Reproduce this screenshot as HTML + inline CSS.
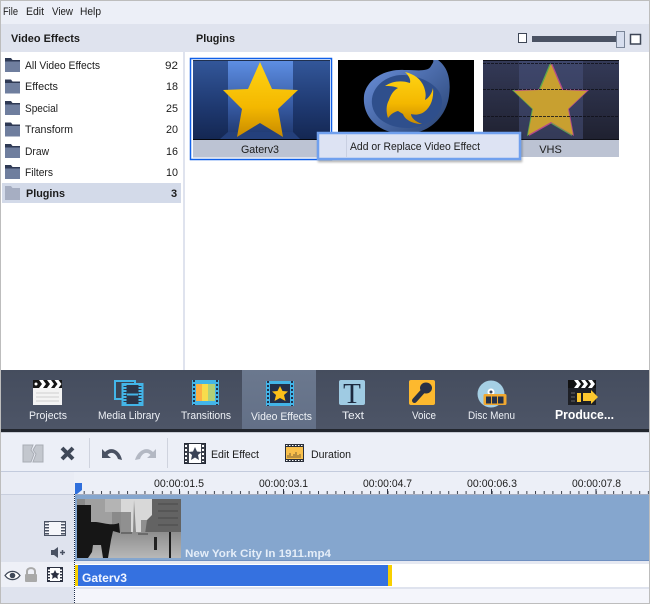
<!DOCTYPE html>
<html><head><meta charset="utf-8"><style>
html,body{margin:0;padding:0;width:650px;height:604px;overflow:hidden;background:#fff}
svg{display:block}
text{font-family:"Liberation Sans",sans-serif;font-size:11px;fill:#1c1c1c}
.b{font-weight:bold}
.w{fill:#eef1f6}
.c{text-anchor:middle}
</style></head><body>
<svg width="650" height="604" viewBox="0 0 650 604" xmlns="http://www.w3.org/2000/svg">
<defs>
<linearGradient id="side" x1="0" y1="0" x2="0" y2="1"><stop offset="0" stop-color="#33579a"/><stop offset=".6" stop-color="#1e386f"/><stop offset="1" stop-color="#142752"/></linearGradient>
<linearGradient id="mid" x1="0" y1="0" x2="0" y2="1"><stop offset="0" stop-color="#5e8fe4"/><stop offset=".6" stop-color="#35589f"/><stop offset="1" stop-color="#1d3468"/></linearGradient>
<linearGradient id="gold" x1="0" y1="0" x2="0" y2="1"><stop offset="0" stop-color="#ffd414"/><stop offset=".6" stop-color="#f4b800"/><stop offset="1" stop-color="#c88a00"/></linearGradient>
<linearGradient id="vhs" x1="0" y1="0" x2="0" y2="1"><stop offset="0" stop-color="#343a58"/><stop offset="1" stop-color="#1f2130"/></linearGradient>
<linearGradient id="blue" x1="0" y1="0" x2="1" y2="1"><stop offset="0" stop-color="#6d93e0"/><stop offset="1" stop-color="#26406f"/></linearGradient>
<linearGradient id="bar" x1="0" y1="0" x2="0" y2="1"><stop offset="0" stop-color="#454d5e"/><stop offset="1" stop-color="#4d5567"/></linearGradient>
<linearGradient id="act" x1="0" y1="0" x2="0" y2="1"><stop offset="0" stop-color="#6b788e"/><stop offset="1" stop-color="#637087"/></linearGradient>
<linearGradient id="ground" x1="0" y1="0" x2="0" y2="1"><stop offset="0" stop-color="#8e8e8e"/><stop offset="1" stop-color="#b8b8b8"/></linearGradient>
<pattern id="ticks" x="75" y="488" width="8.68" height="7" patternUnits="userSpaceOnUse"><rect x="0" y="3" width="1" height="3" fill="#3a3f4a"/></pattern>
<filter id="sh" x="-5%" y="-20%" width="110%" height="140%"><feDropShadow dx="1" dy="2" stdDeviation="1" flood-color="#000" flood-opacity=".3"/></filter>
<g id="fold"><path d="M0 0H6L7.5 2H15V14H0Z" fill="#2f3a55"/><rect x="0" y="3.500" width="15" height="10.500" fill="#6f7e9e"/></g>
</defs>

<!-- frame + menu -->
<rect width="650" height="604" fill="#fff"/>
<rect x="0" y="0" width="650" height="24" fill="#eceff7"/>
<text x="3" y="15" textLength="15" lengthAdjust="spacingAndGlyphs">File</text>
<text x="26" y="15" textLength="18" lengthAdjust="spacingAndGlyphs">Edit</text>
<text x="52" y="15" textLength="21" lengthAdjust="spacingAndGlyphs">View</text>
<text x="80" y="15" textLength="21" lengthAdjust="spacingAndGlyphs">Help</text>

<!-- panel headers -->
<rect x="0" y="24" width="650" height="28" fill="#dfe3ee"/>
<rect x="183" y="24" width="2" height="346" fill="#dfe3ee"/>
<text class="b" x="11" y="42" textLength="69" lengthAdjust="spacingAndGlyphs">Video Effects</text>
<text class="b" x="196" y="42" textLength="39" lengthAdjust="spacingAndGlyphs">Plugins</text>

<!-- slider -->
<rect x="518.500" y="33.500" width="8" height="9" fill="#fff" stroke="#3e4656"/>
<rect x="532" y="36" width="86" height="6" fill="#4a5263"/>
<rect x="616.500" y="31.500" width="8" height="16" fill="#d7deee" stroke="#7a8598"/>
<rect x="630.500" y="34.500" width="10" height="9.500" fill="#fff" stroke="#3e4656" stroke-width="1.500"/>

<!-- list -->
<rect x="2" y="183" width="179" height="20" fill="#d3dae9"/>
<use href="#fold" x="5" y="58"/><use href="#fold" x="5" y="79.500"/><use href="#fold" x="5" y="101"/><use href="#fold" x="5" y="122.500"/><use href="#fold" x="5" y="144"/><use href="#fold" x="5" y="165"/>
<path d="M5 186H11L12.500 188H20V200H5Z" fill="#a6aec2"/>
<text x="25" y="69" textLength="75" lengthAdjust="spacingAndGlyphs">All Video Effects</text>
<text x="25" y="90" textLength="33" lengthAdjust="spacingAndGlyphs">Effects</text>
<text x="25" y="112" textLength="33" lengthAdjust="spacingAndGlyphs">Special</text>
<text x="25" y="133" textLength="48" lengthAdjust="spacingAndGlyphs">Transform</text>
<text x="25" y="155" textLength="24" lengthAdjust="spacingAndGlyphs">Draw</text>
<text x="25" y="176" textLength="28" lengthAdjust="spacingAndGlyphs">Filters</text>
<text class="b" x="26" y="197" textLength="39" lengthAdjust="spacingAndGlyphs">Plugins</text>
<text x="165" y="69" textLength="13" lengthAdjust="spacingAndGlyphs">92</text>
<text x="166" y="90" textLength="12" lengthAdjust="spacingAndGlyphs">18</text>
<text x="166" y="112" textLength="12" lengthAdjust="spacingAndGlyphs">25</text>
<text x="166" y="133" textLength="12" lengthAdjust="spacingAndGlyphs">20</text>
<text x="166" y="155" textLength="12" lengthAdjust="spacingAndGlyphs">16</text>
<text x="166" y="176" textLength="12" lengthAdjust="spacingAndGlyphs">10</text>
<text class="b" x="171" y="197">3</text>

<!-- thumb 1 -->
<rect x="190.500" y="58.500" width="141" height="101" fill="#fff" stroke="#0f5fe8" stroke-width="1.500"/>
<rect x="193" y="60" width="137" height="80" fill="url(#side)"/>
<rect x="228" y="60" width="65" height="80" fill="url(#mid)"/>
<path d="M220 139 L228 132 H293 L300 139Z" fill="#24407c"/>
<rect x="193" y="60" width="137" height="1" fill="#20304e"/>
<rect x="193" y="139" width="137" height="1" fill="#05070e"/>
<polygon points="260,62 272,89 298,90 278,109 283,137 260,123 237,137 242,109 223,90 248,89" fill="url(#gold)"/>
<rect x="193" y="140" width="137" height="17.500" fill="#bcc3d3"/>
<text class="c" x="260" y="153" textLength="38" lengthAdjust="spacingAndGlyphs">Gaterv3</text>

<!-- thumb 2 -->
<rect x="338" y="60" width="136" height="80" fill="#000"/>
<path d="M438 60 C449 68 451 82 449 96 C446 118 428 133 408 134 C380 135 362 118 364 96 C366 80 384 69 404 70 C418 70 428 72 431 66 C433 63 434 61 433 60Z" fill="url(#blue)"/>
<path d="M372 104 C370 88 386 74 404 75 C420 76 440 84 442 100 C443 116 426 128 408 128 C390 128 374 120 372 104Z" fill="#2f4f8c"/>
<path d="M405 72 C414 74 421 79 424 87 C426 93 426 96 425 100 C429 98 432 93 433 88 C434 98 431 107 424 112 C420 115 414 115 411 114 C411 118 416 122 422 124 C413 124 405 120 403 114 L398 111 C394 112 391 114 388 118 C386 112 386 105 389 100 C391 94 394 90 398 88 C394 86 389 86 385 86 C392 81 402 80 410 83 C411 79 408 75 405 72Z" fill="url(#gold)"/>

<!-- thumb 3 -->
<rect x="483" y="60" width="136" height="80" fill="url(#vhs)"/>
<rect x="519" y="61" width="64" height="78" fill="#4a5480" opacity=".5"/>
<polygon points="550,63 561,89 587,90 567,109 572,136 550,123 527,136 532,109 512,90 539,89" fill="#5fa84c"/>
<polygon points="552,63 563,89 589,90 569,109 574,136 552,123 529,136 534,109 514,90 541,89" fill="#b24a8c"/>
<polygon points="551,64 562,90 587,91 568,109 573,135 551,122 528,135 533,109 514,91 540,90" fill="#c8a030"/>
<g fill="#0f1018"><rect x="483" y="139" width="136" height="1"/><rect x="483" y="60" width="136" height="1"/></g>
<path d="M483 63.500H619M483 89.500H619M483 116.500H619" stroke="#0f1018" stroke-dasharray="3 1" opacity=".8"/>
<rect x="483" y="140" width="136" height="17" fill="#bcc3d3"/>
<text class="c" x="550.500" y="153">VHS</text>

<!-- context menu -->
<g filter="url(#sh)"><rect x="318" y="133" width="202" height="26" fill="#dde3f3" stroke="#6fa0ee" stroke-width="2.500"/></g>
<rect x="346" y="135" width="1" height="22" fill="#c9d0e2"/>
<text x="350" y="150" textLength="130" lengthAdjust="spacingAndGlyphs">Add or Replace Video Effect</text>

<!-- nav bar -->
<rect x="0" y="370" width="650" height="59" fill="url(#bar)"/>
<rect x="242" y="370" width="74" height="59" fill="url(#act)"/>
<rect x="0" y="429" width="650" height="3" fill="#22262e"/>
<rect x="0" y="432" width="650" height="1" fill="#c6cad3"/>
<!-- Projects -->
<rect x="33" y="388" width="29" height="17" fill="#f3f3f3"/>
<rect x="33" y="380" width="29" height="8" fill="#151515"/>
<path d="M39 380h4l3 4-3 4h-4l3-4zM47 380h4l3 4-3 4h-4l3-4zM54.500 380h4l3 4-3 4h-4l3-4z" fill="#fff"/>
<circle cx="36" cy="384" r="1.500" fill="#fff"/>
<path d="M36 393h23M36 397h23M36 401h23" stroke="#cfcfcf"/>
<!-- Media library -->
<rect x="115" y="381" width="20" height="18" fill="#3a4354" stroke="#43b5e8" stroke-width="2"/>
<rect x="122.500" y="384" width="20" height="21" fill="#2c3548" stroke="#43b5e8" stroke-width="2"/>
<path d="M127 394.500h11" stroke="#43b5e8" stroke-width="2"/>
<path d="M125 384v21M140 384v21" stroke="#43b5e8" stroke-width="3" stroke-dasharray="2 1"/>
<!-- Transitions -->
<rect x="192" y="380" width="27" height="25" fill="#43b5e8"/>
<rect x="196" y="384" width="6" height="17" fill="#fdb144"/>
<rect x="202" y="384" width="6" height="17" fill="#f8dc4c"/>
<rect x="208" y="384" width="7" height="17" fill="#b0d078"/>
<path d="M194 380v25M217 380v25" stroke="#21324a" stroke-width="2" stroke-dasharray="2 2"/>
<!-- Video effects -->
<rect x="266" y="381" width="28" height="25" fill="#43b5e8"/>
<rect x="270" y="384" width="20" height="19" fill="#23304a"/>
<path d="M268 381v25M292 381v25" stroke="#23304a" stroke-width="2" stroke-dasharray="2 2"/>
<polygon points="280,386 282.500,391 288,391.500 284,395 285.500,401 280,398 274.500,401 276,395 272,391.500 277.500,391" fill="#fdc119"/>
<!-- Text -->
<rect x="339" y="380" width="26" height="25" rx="2" fill="#9fcbe3"/>
<text x="352" y="403" text-anchor="middle" style="font-family:'Liberation Serif',serif;font-size:29px;fill:#1d2a40">T</text>
<!-- Voice -->
<rect x="409" y="380" width="26" height="25" rx="2" fill="#fdb92e"/>
<path d="M414.500 400.500 L423 391" stroke="#2a3145" stroke-width="5" stroke-linecap="round"/>
<ellipse cx="426" cy="388" rx="6" ry="5.500" fill="#2a3145"/>
<!-- Disc -->
<circle cx="491" cy="394" r="13.500" fill="#a5cfe4"/>
<circle cx="491" cy="392" r="3.500" fill="#fff"/>
<circle cx="491" cy="392" r="1.500" fill="#39445a"/>
<rect x="484" y="394.500" width="22" height="10" rx="1" fill="#f0a830" stroke="#f0a830"/>
<rect x="486" y="396.500" width="5" height="7" fill="#243149"/><rect x="492" y="396.500" width="5" height="7" fill="#243149"/><rect x="498" y="396.500" width="5.500" height="7" fill="#243149"/>
<!-- Produce -->
<rect x="568" y="388" width="28" height="17" fill="#1e2026"/>
<rect x="568" y="380" width="28" height="8" fill="#121212"/>
<path d="M574 380h4l3 4-3 4h-4l3-4zM581 380h4l3 4-3 4h-4l3-4zM588 380h4l3 4-3 4h-4l3-4z" fill="#fff"/>
<path d="M577 393h4v9h-4zM583 393h8v-3l7 7-7 7v-3h-8z" fill="#fdc82e"/>
<path d="M571 393h4M571 397h4M571 401h4" stroke="#666"/>
<text class="w" x="29" y="419" textLength="38" lengthAdjust="spacingAndGlyphs">Projects</text>
<text class="w" x="98" y="419" textLength="62" lengthAdjust="spacingAndGlyphs">Media Library</text>
<text class="w" x="181" y="419" textLength="50" lengthAdjust="spacingAndGlyphs">Transitions</text>
<text class="w" x="251" y="420" textLength="61" lengthAdjust="spacingAndGlyphs">Video Effects</text>
<text class="w" x="342" y="419" textLength="22" lengthAdjust="spacingAndGlyphs">Text</text>
<text class="w" x="412" y="419" textLength="24" lengthAdjust="spacingAndGlyphs">Voice</text>
<text class="w" x="468" y="419" textLength="47" lengthAdjust="spacingAndGlyphs">Disc Menu</text>
<text class="w b" x="555" y="419" textLength="59" lengthAdjust="spacingAndGlyphs" style="font-size:13px;fill:#fff">Produce...</text>

<!-- toolbar -->
<rect x="0" y="433" width="650" height="39" fill="#eceff7"/>
<rect x="0" y="471" width="650" height="1" fill="#c3cbdd"/>
<rect x="89" y="438" width="1" height="30" fill="#cfd3de"/>
<rect x="167" y="438" width="1" height="30" fill="#cfd3de"/>
<path d="M23 445 H33 L31 450 L34 454 L31 462 H23Z M36 445 H43 V462 H33 L36 454 L33 450Z" fill="#c3c7ce" stroke="#a8acb4" stroke-width="1"/>
<path d="M62 448 L73 459 M73 448 L62 459" stroke="#3f4858" stroke-width="4"/>
<path d="M102 449 V458 H111 L107.500 455 C111 451 116 453 118 459 L122 460 C120 450 111 446 105 452Z" fill="#4a5263"/>
<path d="M156 449 V458 H147 L150.500 455 C147 451 142 453 140 459 L135 460 C138 450 147 446 153 452Z" fill="#b3b8c3"/>
<rect x="184.500" y="443.500" width="21" height="20" fill="#fff" stroke="#252a35"/>
<rect x="185" y="444" width="4" height="19" fill="#3a3f4a"/><rect x="201" y="444" width="4" height="19" fill="#3a3f4a"/>
<path d="M186 445v17M203 445v17" stroke="#fff" stroke-width="2" stroke-dasharray="2 2"/>
<polygon points="195,447 197,451.500 201.500,452 198,455 199,460 195,457.500 191,460 192,455 188.500,452 193,451.500" fill="#3a4356"/>
<text x="211" y="458" textLength="48" lengthAdjust="spacingAndGlyphs">Edit Effect</text>
<rect x="285" y="444" width="19" height="18" fill="#2a2f3a"/>
<rect x="286" y="447" width="17" height="12" fill="#f9c04b"/>
<path d="M286 445.500h17M286 460.500h17" stroke="#fff" stroke-dasharray="1.500 1.500"/>
<path d="M288 458v-3M290 458v-5M292 458v-2M294 458v-4M296 458v-6M298 458v-3M300 458v-4" stroke="#7a6030"/>
<text x="311" y="458" textLength="40" lengthAdjust="spacingAndGlyphs">Duration</text>

<!-- ruler -->
<rect x="0" y="472" width="650" height="23" fill="#eceff7"/>
<rect x="0" y="472" width="74" height="23" fill="#e9ecf5"/>
<rect x="75" y="488" width="575" height="7" fill="url(#ticks)"/>
<path d="M179.500 489v5M283.500 489v5M387.500 489v5M491.500 489v5M596 489v5" stroke="#2c3140"/>
<rect x="0" y="494" width="74" height="1" fill="#c9cfde"/>
<rect x="75" y="494" width="575" height="1" fill="#a5adc0"/>
<text x="154" y="487" textLength="50" lengthAdjust="spacingAndGlyphs">00:00:01.5</text>
<text x="259" y="487" textLength="49" lengthAdjust="spacingAndGlyphs">00:00:03.1</text>
<text x="363" y="487" textLength="49" lengthAdjust="spacingAndGlyphs">00:00:04.7</text>
<text x="467" y="487" textLength="50" lengthAdjust="spacingAndGlyphs">00:00:06.3</text>
<text x="572" y="487" textLength="49" lengthAdjust="spacingAndGlyphs">00:00:07.8</text>

<!-- track left -->
<rect x="0" y="495" width="74" height="67" fill="#dfe3ee"/>
<rect x="0" y="562" width="74" height="25" fill="#eef0f7"/>
<rect x="0" y="587" width="74" height="16" fill="#dfe3ee"/>
<rect x="44.500" y="521.500" width="21" height="14" fill="#f5f6fa" stroke="#4a5263"/>
<path d="M47 521v15M63 521v15" stroke="#4a5263" stroke-width="4" stroke-dasharray="1.500 1.500"/>
<rect x="50" y="522" width="11" height="13" fill="#f5f6fa"/>
<path d="M51 550 H54 L58 547 V558 L54 555 H51Z" fill="#4a5263"/>
<path d="M60 552.500h5M62.500 550v5" stroke="#4a5263" stroke-width="1.500"/>
<path d="M5 575.500 C9 570 16 570 20 575.500 C16 581 9 581 5 575.500Z" fill="#fff" stroke="#3f4858" stroke-width="1.200"/>
<circle cx="12.500" cy="575.500" r="2.800" fill="#3f4858"/>
<path d="M27 574 V571.500 C27 567 35 567 35 571.500 V574" fill="none" stroke="#a9a9a9" stroke-width="2"/>
<rect x="25" y="574" width="12" height="8" rx="1" fill="#a9a9a9"/>
<rect x="47.500" y="567.500" width="15" height="14" fill="#fff" stroke="#2b3040"/>
<path d="M49 568v13M61 568v13" stroke="#2b3040" stroke-width="2" stroke-dasharray="1.500 1.500"/>
<polygon points="55,570 56.500,573 59.500,573.500 57.300,575.700 58,579 55,577.300 52,579 52.700,575.700 50.500,573.500 53.500,573" fill="#2b3040"/>

<!-- track right -->
<rect x="75" y="495" width="575" height="65" fill="#85a6ce"/>
<rect x="75" y="560" width="575" height="1" fill="#6f8fc0"/>
<rect x="75" y="561" width="575" height="3" fill="#e6e9f2"/>
<rect x="75" y="564" width="575" height="23" fill="#fff"/>
<rect x="75" y="587" width="575" height="2" fill="#dfe3ee"/>
<rect x="75" y="589" width="575" height="14" fill="#f4f5fb"/>

<!-- photo thumbnail -->
<rect x="77" y="499" width="104" height="59" fill="#d8d8d8"/>
<path d="M77 499H121V534H77Z" fill="#8a8a8a"/>
<path d="M85 499H112V530H85Z" fill="#a0a0a0"/>
<path d="M105 499H121V512H105Z" fill="#b4b4b4"/>
<path d="M121 512H131V534H121Z" fill="#909090"/>
<path d="M141 520H151V534H141Z" fill="#8f8f8f"/>
<path d="M134 500L136 532H133Z" fill="#8a8a8a"/>
<path d="M152 499H181V534H145L147 520L152 515Z" fill="#636363"/>
<path d="M158 504H178M158 511H178M158 518H178M158 525H178" stroke="#4a4a4a"/>
<rect x="77" y="532" width="104" height="26" fill="url(#ground)"/>
<path d="M77 505H91V522H96C104 523 112 526 119 523L120 533 113 531 111 540 108 558H103L101 545H93L92 552 88 558H77Z" fill="#161616"/>
<path d="M138 534H148M121 533H132" stroke="#444"/>
<rect x="154" y="537" width="3" height="13" fill="#222"/>
<rect x="169" y="532" width="2" height="26" fill="#1c1c1c"/>
<text class="b" x="185" y="557" textLength="146" lengthAdjust="spacingAndGlyphs" style="fill:#e4edf8">New York City In 1911.mp4</text>

<!-- clip -->
<rect x="75" y="565" width="315" height="21" fill="#3571e0"/>
<rect x="75" y="565" width="3" height="21" fill="#f8d000"/>
<rect x="388" y="565" width="4" height="21" fill="#f8d000"/>
<text class="b" x="82" y="582" textLength="45" lengthAdjust="spacingAndGlyphs" style="fill:#f2f6ff;font-size:12px">Gaterv3</text>

<!-- playhead -->
<path d="M75 483 H82 V490 L77 494 H75Z" fill="#2f6fdc"/>
<path d="M74.500 494 V603" stroke="#1a2a4a" stroke-dasharray="1 1"/>

<!-- borders -->
<path d="M.5 0 V604 M649.500 0 V604 M0 .5 H650 M0 603.500 H650" stroke="#bdbdbd" fill="none"/>
</svg>
</body></html>
